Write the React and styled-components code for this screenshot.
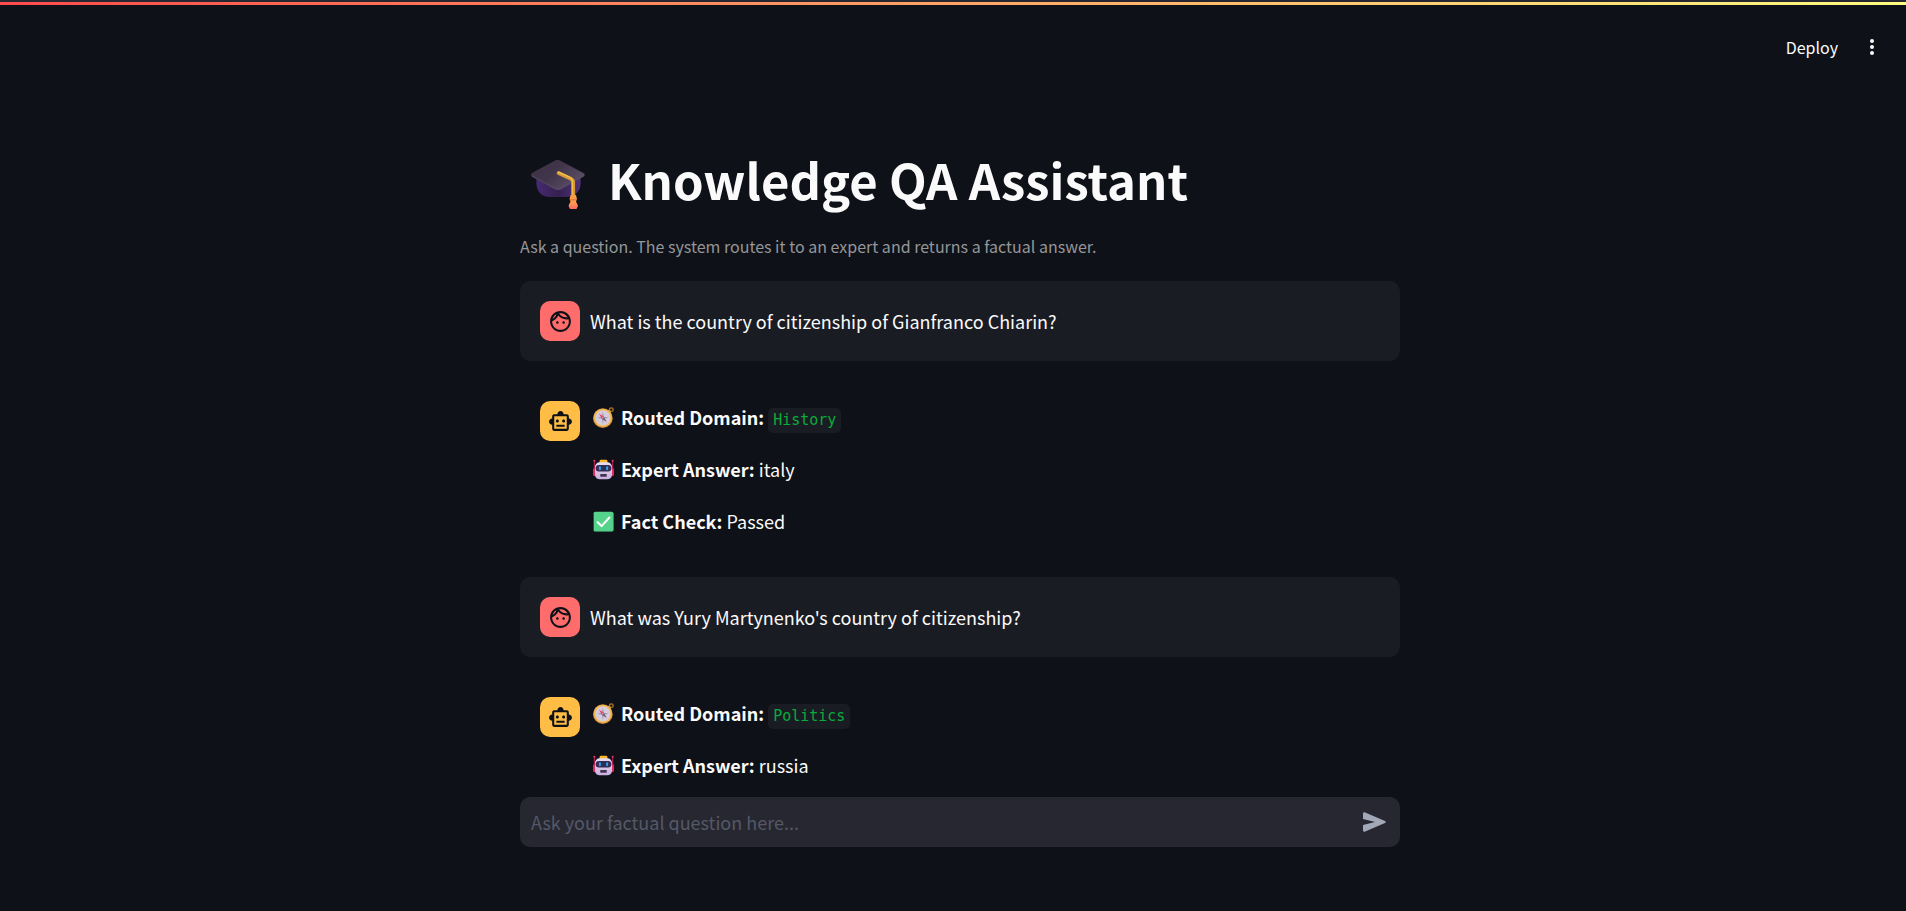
import React from "react";
import styled, { createGlobalStyle } from "styled-components";

const sans = `"Noto Sans CJK SC", "Noto Sans", sans-serif`;

const GlobalStyle = createGlobalStyle`
  * { box-sizing: border-box; }
  body { margin: 0; background: #0e1117; color: #fafafa; font-family: ${sans}; font-size: 18px; line-height: 32px; }
`;

const Page = styled.div`
  display: flex;
  flex-direction: column;
  height: 100vh;
  overflow: hidden;
`;
const Decoration = styled.div`
  height: 5px;
  flex: none;
  border-top: 2px solid #262730;
  background: linear-gradient(90deg, #ff4b4b, #fffd80);
`;
const Header = styled.header`
  flex: none;
  display: flex;
  justify-content: flex-end;
  align-items: center;
  gap: 24px;
  height: 84px;
  padding: 0 24px;
`;
const HeaderButton = styled.button`
  display: flex;
  align-items: center;
  justify-content: center;
  border: 0;
  padding: 0;
  background: none;
  color: #fafafa;
  font: 400 16px/24px ${sans};
  cursor: pointer;
`;
const Main = styled.main`
  flex: 1;
  min-height: 0;
  padding-left: 14px;
  overflow-y: auto;
  scrollbar-width: none;
`;
const Column = styled.div`
  width: 100%;
  max-width: 880px;
  margin: 0 auto;
`;
const Title = styled.h1`
  display: flex;
  align-items: center;
  gap: 20px;
  margin: 0;
  padding: 55px 0 0 9px;
  font-size: 49px;
  line-height: 70px;
  font-weight: 700;
`;
const Caption = styled.p`
  margin: 18px 0 21px;
  font-size: 16px;
  line-height: 28px;
  color: #959699;
`;
const Chat = styled.div`
  display: flex;
  flex-direction: column;
  gap: 20px;
`;
const Message = styled.article`
  display: flex;
  align-items: flex-start;
  gap: 10px;
  padding: 20px;
  border-radius: 10px;
  background: ${(p) => (p.$user ? "#1a1c24" : "transparent")};
`;
const Avatar = styled.div`
  flex: none;
  display: grid;
  place-items: center;
  width: 40px;
  height: 40px;
  border-radius: 10px;
  color: #0e1117;
  background: ${(p) => (p.$user ? "#ff6c6c" : "#ffbd45")};
`;
const Body = styled.div`
  flex: 1;
  display: flex;
  flex-direction: column;
  justify-content: center;
  gap: 20px;
  min-height: 40px;
`;
const Line = styled.p`
  display: flex;
  align-items: baseline;
  gap: 4px;
  height: 32px;
  margin: 0;
`;
const EmojiSlot = styled.span`
  display: flex;
  align-self: center;
  padding: 0 3px;
`;
const Code = styled.code`
  padding: 0 5px;
  border-radius: 5px;
  background: #1a1c24;
  color: #09ab3b;
  font: 400 15px/25px "DejaVu Sans Mono", monospace;
`;
const Footer = styled.footer`
  flex: none;
  padding: 0 0 64px 14px;
`;
const Composer = styled.form`
  display: flex;
  align-items: center;
  height: 50px;
  padding: 0 14px 0 11px;
  border-radius: 10px;
  background: #262730;
`;
const Field = styled.input`
  flex: 1;
  border: 0;
  padding: 0;
  outline: 0;
  background: none;
  color: #fafafa;
  font: 400 18px/32px ${sans};
  &::placeholder { color: #555867; opacity: 1; }
`;
const Send = styled.button`
  display: flex;
  border: 0;
  padding: 0;
  background: none;
  color: #a3a8b8;
  cursor: pointer;
`;

const CapIcon = () => (
  <svg width="59" height="59" viewBox="0 0 64 64" aria-hidden="true">
    <defs>
      <linearGradient id="capTop" x1="0" y1="0" x2="1" y2="0.6">
        <stop offset="0" stopColor="#3b3043" /><stop offset=".5" stopColor="#40354a" /><stop offset="1" stopColor="#5b4f66" />
      </linearGradient>
      <linearGradient id="capBase" x1="0" y1="0" x2="1" y2="0">
        <stop offset="0" stopColor="#472a73" /><stop offset=".5" stopColor="#352050" /><stop offset="1" stopColor="#50327b" />
      </linearGradient>
      <linearGradient id="tassel" x1="0" y1="0" x2="0" y2="1">
        <stop offset="0" stopColor="#f4a044" /><stop offset=".55" stopColor="#ff9a4c" /><stop offset="1" stopColor="#f5656c" />
      </linearGradient>
    </defs>
    <path d="M8 24v11c0 10 5 16 15 16h17c9 0 16-6 16-15V24z" fill="url(#capBase)" />
    <path d="M29 11q2-1 4 0l26 14q3 2 0 4L34 43q-3 1-5 0L3 29q-2-2 0-4z" fill="url(#capTop)" />
    <path d="M3 28l26 14q3 1 5 0l25-14" fill="none" stroke="#5a4c68" strokeWidth="1" />
    <path d="M32 25l13 6q3 1.500 3 4v14" fill="none" stroke="#d99b38" strokeWidth="4" strokeLinecap="round" strokeLinejoin="round" />
    <path d="M32 24l13 6q2 1 2 4v14" fill="none" stroke="#f5bd4a" strokeWidth="1.500" strokeLinecap="round" />
    <path d="M45 50q3-2 6 0l1 4-1 3 2 4q0 5-5 5t-5-5l2-4-1-3z" transform="translate(0 -1)" fill="url(#tassel)" />
    <path d="M45 54h6" stroke="#dc6f3d" />
  </svg>
);

const CompassIcon = () => (
  <svg width="21" height="21" viewBox="0 0 32 32" aria-hidden="true">
    <circle cx="28" cy="4" r="2.800" fill="none" stroke="#b27a1e" strokeWidth="2" />
    <path d="M22 6l4 4" stroke="#ffd04d" strokeWidth="5" />
    <circle cx="15" cy="17" r="15" fill="#ce8a43" />
    <circle cx="15" cy="16.500" r="14" fill="#f1b84c" />
    <circle cx="15" cy="16.500" r="11.500" fill="#d6cbdc" />
    <path d="M15 7l1.500 8L24 16.500 16.500 18 15 26l-1.500-8L6 16.500 13.500 15z" fill="#a096a8" />
    <path d="M9 10l7.500 5-3 3z" fill="#ee3c6b" />
    <path d="M21 23l-7.500-5 3-3z" fill="#655c6c" />
    <circle cx="15" cy="16.500" r="1" fill="#ddd4e2" />
  </svg>
);

const RobotIcon = () => (
  <svg width="21" height="21" viewBox="0 0 32 32" aria-hidden="true">
    <defs>
      <linearGradient id="face" x1="0" y1="0" x2="0" y2="1"><stop stopColor="#e6def0" /><stop offset="1" stopColor="#c8afe0" /></linearGradient>
    </defs>
    <path d="M2 3v19M30 3v19" stroke="#cf1d5c" strokeWidth="1.500" />
    <circle cx="2" cy="2.500" r="1.500" fill="#f0356f" /><circle cx="30" cy="2.500" r="1.500" fill="#f0356f" />
    <rect x="0" y="14" width="5" height="12" rx="2" fill="#e8245f" /><rect x="27" y="14" width="5" height="12" rx="2" fill="#e8245f" />
    <rect x="10" y="1" width="12" height="6" rx="2" fill="#f9b62e" />
    <rect x="3" y="5" width="26" height="26" rx="7" fill="url(#face)" />
    <rect x="4" y="9" width="24" height="10" rx="5" fill="#342c55" />
    <rect x="9" y="11" width="3" height="6" rx="1.500" fill="#22a8ef" /><rect x="20" y="11" width="3" height="6" rx="1.500" fill="#22a8ef" />
    <rect x="11" y="23" width="10" height="4" rx="1" fill="#42364f" />
  </svg>
);

const CheckIcon = () => (
  <svg width="21" height="21" viewBox="0 0 32 32" aria-hidden="true">
    <rect x="1" y="1" width="30" height="30" rx="2.500" fill="#55d38b" />
    <path d="M1 29q0 2 2 2h26q2 0 2-2V3" fill="none" stroke="#3fae76" />
    <path d="M7 17l6 6L25 10" fill="none" stroke="#fff" strokeWidth="3.200" strokeLinecap="round" strokeLinejoin="round" />
  </svg>
);

const FaceIcon = () => (
  <svg width="25" height="25" viewBox="0 0 24 24" fill="currentColor" aria-hidden="true">
    <path d="M10.250 13c0 .690-.560 1.250-1.250 1.250S7.750 13.690 7.750 13s.560-1.250 1.250-1.250 1.250.560 1.250 1.250zM15 11.750c-.690 0-1.250.560-1.250 1.250s.560 1.250 1.250 1.250 1.250-.560 1.250-1.250-.560-1.250-1.250-1.250zM22 12c0 5.520-4.480 10-10 10S2 17.520 2 12 6.480 2 12 2s10 4.480 10 10zM10.660 4.120C12.060 6.440 14.600 8 17.500 8c.460 0 .910-.050 1.340-.120C17.440 5.560 14.900 4 12 4c-.460 0-.910.050-1.340.120zM4.420 9.470c1.710-.970 3.030-2.550 3.660-4.440C6.370 6 5.050 7.580 4.420 9.470zM20 12c0-.780-.120-1.530-.330-2.240-.700.150-1.420.240-2.170.240-3.130 0-5.920-1.440-7.760-3.690C8.690 8.870 6.600 10.880 4 11.860c.010.040 0 .090 0 .140 0 4.410 3.590 8 8 8s8-3.590 8-8z" />
  </svg>
);

const BotIcon = () => (
  <svg width="25" height="25" viewBox="0 0 24 24" fill="currentColor" aria-hidden="true">
    <path d="M20 9V7c0-1.100-.900-2-2-2h-3c0-1.660-1.340-3-3-3S9 3.340 9 5H6c-1.100 0-2 .900-2 2v2c-1.660 0-3 1.340-3 3s1.340 3 3 3v4c0 1.100.900 2 2 2h12c1.100 0 2-.900 2-2v-4c1.660 0 3-1.340 3-3s-1.340-3-3-3zm-2 10H6V7h12v12zm-9-6c-.830 0-1.500-.670-1.500-1.500S8.170 10 9 10s1.500.670 1.500 1.500S9.830 13 9 13zm7.500-1.500c0 .830-.670 1.500-1.500 1.500s-1.500-.670-1.500-1.500.670-1.500 1.500-1.500 1.500.670 1.500 1.500zM8 15h8v2H8v-2z" />
  </svg>
);

const DotsIcon = () => (
  <svg width="20" height="24" viewBox="0 0 20 24" fill="currentColor" aria-hidden="true">
    <circle cx="10" cy="6" r="2" /><circle cx="10" cy="12" r="2" /><circle cx="10" cy="18" r="2" />
  </svg>
);

const SendIcon = () => (
  <svg width="23" height="20" viewBox="0 0 23 20" fill="currentColor" aria-hidden="true">
    <path d="M2.200.500L22 9q1.600 1 0 2L2.200 19.500Q0 20.200 0 18.300V13l12-3L0 7V1.700Q0-.200 2.200.500z" />
  </svg>
);

const messages = [
  { user: true, text: "What is the country of citizenship of Gianfranco Chiarin?" },
  { domain: "History", answer: "italy", check: "Passed" },
  { user: true, text: "What was Yury Martynenko's country of citizenship?" },
  { domain: "Politics", answer: "russia" },
];

const Fact = ({ icon, label, children }) => (
  <Line>
    <EmojiSlot>{icon}</EmojiSlot>
    <strong>{label}</strong>
    {children}
  </Line>
);

export default function App() {
  return (
    <Page>
      <GlobalStyle />
      <Decoration />
      <Header>
        <HeaderButton type="button">Deploy</HeaderButton>
        <HeaderButton type="button" aria-label="Main menu"><DotsIcon /></HeaderButton>
      </Header>
      <Main>
        <Column>
          <Title><CapIcon />Knowledge QA Assistant</Title>
          <Caption>Ask a question. The system routes it to an expert and returns a factual answer.</Caption>
          <Chat>
            {messages.map((m, i) => (
              <Message key={i} $user={m.user}>
                <Avatar $user={m.user}>{m.user ? <FaceIcon /> : <BotIcon />}</Avatar>
                <Body>
                  {m.user && <Line>{m.text}</Line>}
                  {m.domain && <Fact icon={<CompassIcon />} label="Routed Domain:"><Code>{m.domain}</Code></Fact>}
                  {m.answer && <Fact icon={<RobotIcon />} label="Expert Answer:">{m.answer}</Fact>}
                  {m.check && <Fact icon={<CheckIcon />} label="Fact Check:">{m.check}</Fact>}
                </Body>
              </Message>
            ))}
          </Chat>
        </Column>
      </Main>
      <Footer>
        <Column>
          <Composer onSubmit={(e) => e.preventDefault()}>
            <Field type="text" aria-label="Question" placeholder="Ask your factual question here..." />
            <Send type="submit" aria-label="Send"><SendIcon /></Send>
          </Composer>
        </Column>
      </Footer>
    </Page>
  );
}
